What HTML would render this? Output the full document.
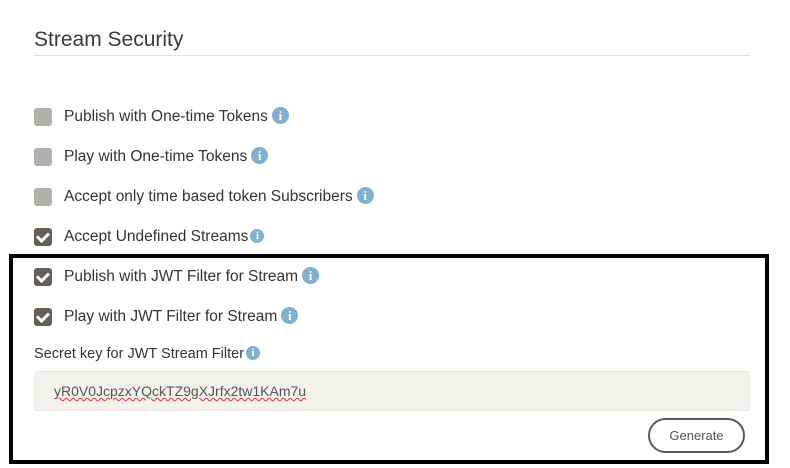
<!DOCTYPE html>
<html><head><style>
body{margin:0;width:790px;height:468px;background:#fff;font-family:"Liberation Sans",sans-serif;color:#333;position:relative;overflow:hidden}
.a{position:absolute}
.t{left:34px;top:28px;font-size:21px;color:#3a3a3a}
.hr{left:34px;top:55px;width:716px;height:1px;background:#e3e3e3}
.row{position:absolute;left:34px;height:20px;display:flex;align-items:center;font-size:15.5px;color:#333}
.cb{width:18px;height:18px;border-radius:3px;background:#b1b0ad;margin-right:12px;position:relative}
.cb.on{background:#655f58}
.cb.on:after{content:"";position:absolute;left:5px;top:2px;width:5px;height:9px;border:solid #fff;border-width:0 3px 3px 0;transform:rotate(45deg)}
.i{display:inline-block;position:relative;top:-2px;width:17px;height:17px;border-radius:50%;background:#7eb0cf;color:#fff;font-weight:bold;font-size:13px;line-height:17px;text-align:center;margin-left:4px;font-family:"Liberation Serif",serif}
.i.s{width:14px;height:14px;line-height:14px;font-size:11px;margin-left:2px;top:-1px}
.box{left:9px;top:254px;width:752px;height:202px;border:4px solid #000}
.lbl{left:34px;top:346px;font-size:14.5px;color:#333;display:flex;align-items:center}
.in{left:34px;top:371px;width:716px;height:40px;background:#f2f1ee;border:1px solid #e8e7e3;border-radius:4px;box-sizing:border-box;font-size:14px;color:#555;padding:11px 0 0 19px}
.in span{text-decoration:underline wavy #d33;text-decoration-thickness:1px}
.btn{left:648px;top:418px;width:97px;height:35px;border:2px solid #5a5a5a;border-radius:18px;box-sizing:border-box;font-size:13px;color:#555;text-align:center;line-height:31px}
</style></head><body>
<div class="a t">Stream Security</div>
<div class="a hr"></div>
<div class="row" style="top:107px"><div class="cb"></div>Publish with One-time Tokens<span class="i">i</span></div>
<div class="row" style="top:147px"><div class="cb"></div>Play with One-time Tokens<span class="i">i</span></div>
<div class="row" style="top:187px"><div class="cb"></div>Accept only time based token Subscribers<span class="i">i</span></div>
<div class="row" style="top:227px"><div class="cb on"></div>Accept Undefined Streams<span class="i s">i</span></div>
<div class="row" style="top:267px"><div class="cb on"></div>Publish with JWT Filter for Stream<span class="i">i</span></div>
<div class="row" style="top:307px"><div class="cb on"></div>Play with JWT Filter for Stream<span class="i">i</span></div>
<div class="a lbl">Secret key for JWT Stream Filter<span class="i s">i</span></div>
<div class="a in"><span>yR0V0JcpzxYQckTZ9gXJrfx2tw1KAm7u</span></div>
<div class="a btn">Generate</div>
<div class="a box"></div>
</body></html>
